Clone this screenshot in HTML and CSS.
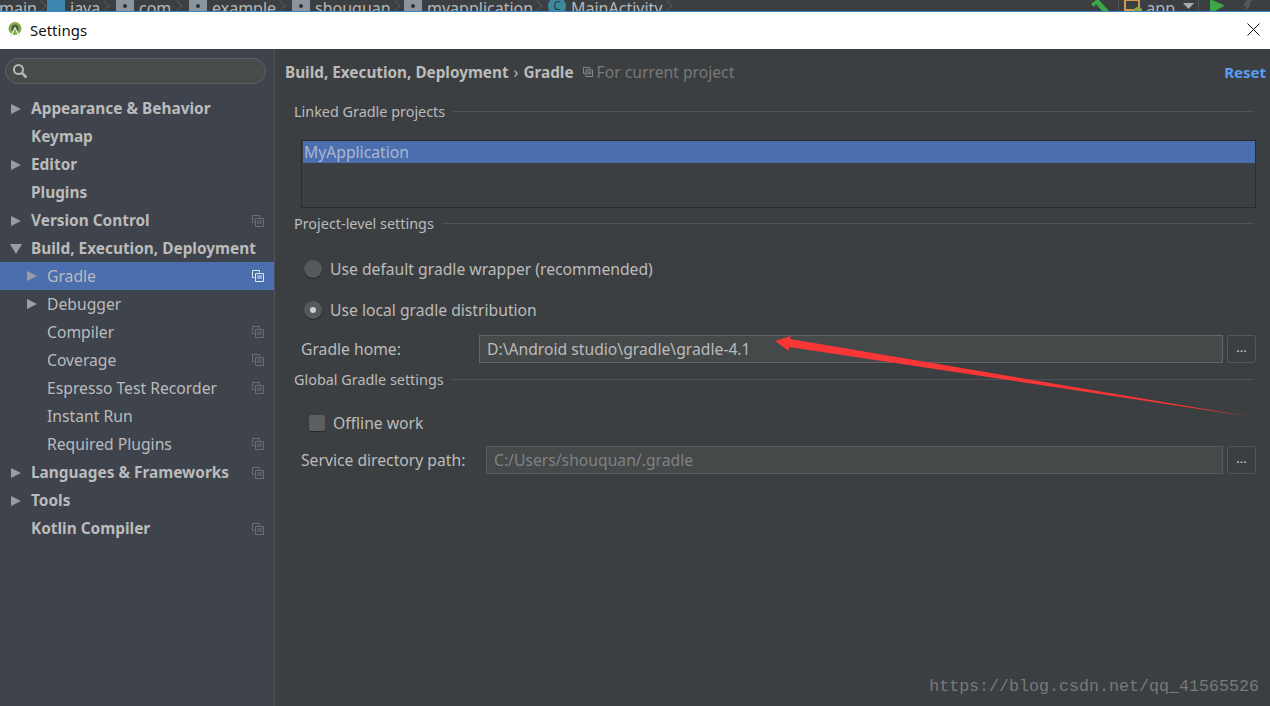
FILE: index.html
```html
<!DOCTYPE html>
<html lang="en">
  <head>
    <meta charset="UTF-8" />
    <meta name="viewport" content="width=device-width, initial-scale=1.0" />
    <title>Settings</title>
    <link rel="stylesheet" href="styles.css">
  </head>
  <body>
    <svg class="defs" width="0" height="0">
      <symbol id="copy" viewBox="0 0 12 12">
        <path d="M.5.5h7v2M.5.5v7h2" fill="none" stroke="currentColor" />
        <path d="M3.5 3.5h8v8h-8z" fill="none" stroke="currentColor" />
        <path d="M5 6h5M5 8h5" stroke="currentColor" />
      </symbol>
      <symbol id="folder" viewBox="0 0 18 14">
        <path d="M0 0h7l2 2h9v12H0z" fill="#8a949c" />
        <circle cx="9" cy="8" r="2" fill="#2d3134" />
      </symbol>
    </svg>

    <div class="ide-bar">
      <div class="crumbs">
        <span class="crumb crumb-first">main</span>
        <span class="crumb"><svg class="crumb-icon"><path d="M0 0h7l2 2h9v12H0z" fill="#3d86b0" /></svg>java</span>
        <span class="crumb"><svg class="crumb-icon"><use href="#folder" /></svg>com</span>
        <span class="crumb"><svg class="crumb-icon"><use href="#folder" /></svg>example</span>
        <span class="crumb"><svg class="crumb-icon"><use href="#folder" /></svg>shouquan</span>
        <span class="crumb"><svg class="crumb-icon"><use href="#folder" /></svg>myapplication</span>
        <span class="crumb crumb-last"><span class="class-badge">C</span>MainActivity</span>
      </div>
      <div class="run-tools">
        <svg class="tool-hammer" width="18" height="11"><path d="M0 4L5 0h3l10 11h-7L5 4 3 7z" fill="#3fa648" /></svg>
        <span class="tool-sep"></span>
        <svg class="tool-app" width="20" height="11"><path d="M1 0h14v10H1z" fill="none" stroke="#d19a4f" stroke-width="2" /><path d="M10 11a4 4 0 0 1 8 0z" fill="#88a83a" /></svg>
        <span class="tool-name">app</span>
        <svg class="tool-caret" width="11" height="7"><path d="M0 1h11L5.500 7z" fill="#a9adb0" /></svg>
        <span class="tool-sep"></span>
        <svg class="tool-run" width="15" height="11"><path d="M0 0h2l13 5.500L5 11H0z" fill="#3fa648" /></svg>
        <svg class="tool-bolt" width="10" height="11"><path d="M5 0h5L7 5h2l-6 6 1-5H1z" fill="#55595c" /></svg>
      </div>
    </div>

    <div class="titlebar">
      <svg class="app-logo" width="14" height="15" viewBox="0 0 14 15">
        <circle cx="7" cy="6.500" r="6.500" fill="#7fae45" />
        <path d="M7 2.500a3.500 3.500 0 0 1 3.500 3.500v3h-7V6A3.500 3.500 0 0 1 7 2.500z" fill="#4f5d45" />
        <path d="M2.500 14.500L7 6l4.500 8.500" fill="none" stroke="#e6e9e2" stroke-width="1.500" />
      </svg>
      <span class="title-text">Settings</span>
      <svg class="close-x" width="13" height="13"><path d="M.5.5l12 12M12.500.5l-12 12" stroke="#111" fill="none" /></svg>
    </div>

    <div class="dialog">
      <div class="sidebar">
        <div class="search">
          <svg width="16" height="16" viewBox="0 0 16 16"><circle cx="6.500" cy="6.500" r="4.500" fill="none" stroke="#b4b6b8" stroke-width="2" /><path d="M10 10l4.500 4.500" stroke="#b4b6b8" stroke-width="2.500" /></svg>
        </div>
        <ul class="tree">
          <li class="row top"><span class="arrow"></span>Appearance &amp; Behavior</li>
          <li class="row top"><span class="arrow none"></span>Keymap</li>
          <li class="row top"><span class="arrow"></span>Editor</li>
          <li class="row top"><span class="arrow none"></span>Plugins</li>
          <li class="row top"><span class="arrow"></span>Version Control<svg class="copy"><use href="#copy" /></svg></li>
          <li class="row top"><span class="arrow open"></span>Build, Execution, Deployment</li>
          <li class="row sub selected"><span class="arrow"></span>Gradle<svg class="copy"><use href="#copy" /></svg></li>
          <li class="row sub"><span class="arrow"></span>Debugger</li>
          <li class="row sub"><span class="arrow none"></span>Compiler<svg class="copy"><use href="#copy" /></svg></li>
          <li class="row sub"><span class="arrow none"></span>Coverage<svg class="copy"><use href="#copy" /></svg></li>
          <li class="row sub"><span class="arrow none"></span>Espresso Test Recorder<svg class="copy"><use href="#copy" /></svg></li>
          <li class="row sub"><span class="arrow none"></span>Instant Run</li>
          <li class="row sub"><span class="arrow none"></span>Required Plugins<svg class="copy"><use href="#copy" /></svg></li>
          <li class="row top"><span class="arrow"></span>Languages &amp; Frameworks<svg class="copy"><use href="#copy" /></svg></li>
          <li class="row top"><span class="arrow"></span>Tools</li>
          <li class="row top"><span class="arrow none"></span>Kotlin Compiler<svg class="copy"><use href="#copy" /></svg></li>
        </ul>
      </div>

      <div class="panel">
        <div class="panel-head">
          <b>Build, Execution, Deployment</b>
          <span class="head-sep">›</span>
          <b>Gradle</b>
          <svg class="copy head-copy"><use href="#copy" /></svg>
          <span class="head-note">For current project</span>
          <a class="reset">Reset</a>
        </div>

        <div class="section section-linked">Linked Gradle projects</div>
        <div class="project-list">
          <div class="project-row">MyApplication</div>
        </div>

        <div class="section section-project">Project-level settings</div>
        <label class="radio-row radio-first"><span class="radio"></span>Use default gradle wrapper (recommended)</label>
        <label class="radio-row radio-second"><span class="radio checked"></span>Use local gradle distribution</label>
        <div class="field-row field-home">
          <span class="field-label home-label">Gradle home:</span>
          <div class="field">D:\Android studio\gradle\gradle-4.1</div>
          <div class="more">...</div>
        </div>

        <div class="section section-global">Global Gradle settings</div>
        <label class="check-row"><span class="checkbox"></span>Offline work</label>
        <div class="field-row field-service">
          <span class="field-label service-label">Service directory path:</span>
          <div class="field muted">C:/Users/shouquan/.gradle</div>
          <div class="more">...</div>
        </div>
      </div>
    </div>

    <svg class="red-arrow" width="1270" height="706" viewBox="0 0 1270 706">
      <path d="M775 341L791 336 790 339 1252 417 789 347 789 351z" fill="#f93636" />
    </svg>
    <div class="watermark">https://blog.csdn.net/qq_41565526</div>
  </body>
</html>
```

FILE: styles.css
```css
* {
  box-sizing: border-box;
}

html,
body {
  height: 100%;
}

body {
  position: relative;
  display: flex;
  flex-direction: column;
  margin: 0;
  overflow: hidden;
  background-color: #3c3f41;
  color: #bbbbbb;
  font-family: "Noto Sans", "Open Sans", sans-serif;
  font-size: 15.7px;
}

b {
  font-size: 15.3px;
}

.defs {
  position: absolute;
}

/* ide window peeking out behind the dialog */
.ide-bar {
  display: flex;
  justify-content: space-between;
  flex: none;
  height: 12px;
  overflow: hidden;
  border-bottom: 1px solid #3c86c4;
  background-color: #3c3f41;
}

.crumbs {
  display: flex;
  margin-top: -3px;
  line-height: 22px;
  font-size: 16px;
  color: #b4b7b9;
}

.crumb {
  display: flex;
  align-items: flex-start;
  width: 73px;
  white-space: nowrap;
}

/* the small chevron between two crumbs */
.crumb::after {
  content: "";
  flex: none;
  width: 7px;
  height: 7px;
  margin: 5px 8px 0 auto;
  border-top: 1px solid #55585a;
  border-right: 1px solid #55585a;
  transform: rotate(45deg);
}

.crumb-first {
  width: 48px;
  margin-left: -1px;
}

.crumb:nth-child(2) { width: 69px; }
.crumb:nth-child(3) { width: 73px; }
.crumb:nth-child(4) { width: 103px; }
.crumb:nth-child(5) { width: 112px; }
.crumb:nth-child(6) { width: 144px; }
.crumb-last { width: 130px; }

.crumb-icon {
  flex: none;
  width: 18px;
  height: 14px;
  margin: 1px 5px 0 0;
}

.class-badge {
  flex: none;
  width: 18px;
  height: 18px;
  margin: 0 5px 0 0;
  border-radius: 50%;
  background-color: #3d8a9e;
  color: #1f3b44;
  font-size: 12px;
  line-height: 18px;
  text-align: center;
}

.run-tools {
  display: flex;
  align-items: flex-start;
  padding-right: 18px;
}

.tool-hammer { margin-right: 9px; }
.tool-app { margin: 0 2px 0 5px; }
.tool-caret { margin: 2px 4px 0 8px; }
.tool-run { margin: 0 17px 0 11px; }

.tool-sep {
  width: 1px;
  height: 11px;
  background-color: #55585a;
}

.tool-name {
  margin-top: -3px;
  font-size: 16px;
  line-height: 22px;
  color: #b4b7b9;
}

.titlebar {
  display: flex;
  align-items: center;
  flex: none;
  height: 37px;
  padding: 0 10px 2px 8px;
  background-color: #ffffff;
  color: #111111;
}

.title-text {
  flex: 1;
  margin-left: 8px;
  font-size: 15px;
}

.dialog {
  display: flex;
  flex: 1;
  min-height: 0;
}

.sidebar {
  flex: none;
  width: 275px;
  padding-top: 9px;
  border-right: 1px solid #50545a;
  background-color: #3e434c;
}

.search {
  display: flex;
  align-items: center;
  width: 261px;
  height: 26px;
  margin-left: 5px;
  padding-left: 6px;
  border: 1px solid #5d6163;
  border-radius: 13px;
  background-color: #474b4c;
}

.tree {
  margin: 10px 0 0;
  padding: 0;
  list-style: none;
}

.row {
  display: flex;
  align-items: center;
  height: 28px;
  padding-right: 10px;
  white-space: nowrap;
}

.row.top {
  padding-top: 1px;
  padding-left: 11px;
  font-size: 15.4px;
  font-weight: 700;
}

.row.sub {
  padding-left: 27px;
}

.row.selected {
  background-color: #4b6eaf;
}

.arrow {
  flex: none;
  width: 0;
  height: 0;
  margin-right: 10px;
  border-top: 5.500px solid transparent;
  border-bottom: 5.500px solid transparent;
  border-left: 10px solid #9a9da0;
}

.arrow.open {
  margin-left: -1px;
  margin-right: 9px;
  border-top: 10px solid #9a9da0;
  border-right: 6px solid transparent;
  border-bottom: 0;
  border-left: 6px solid transparent;
  width: 12px;
}

.arrow.none {
  border-color: transparent;
}

.copy {
  flex: none;
  width: 12px;
  height: 12px;
  margin-left: auto;
  color: #6b6f73;
}

.selected .copy {
  color: #e4e8ef;
}

.panel {
  flex: 1;
  min-width: 0;
  padding: 0 16px 0 19px;
}

.panel-head {
  display: flex;
  align-items: center;
  height: 22px;
  margin: 12px 0 0 -9px;
  white-space: nowrap;
}

.head-sep {
  margin: 0 5px;
}

.head-copy {
  width: 10px;
  height: 10px;
  margin: 0 4px 0 9px;
  color: #9a9da0;
}

.head-note {
  color: #787878;
}

.reset {
  margin-left: auto;
  margin-right: -12px;
  color: #589df6;
  font-size: 15px;
  font-weight: 700;
}

.section {
  display: flex;
  align-items: center;
  height: 20px;
  font-size: 14.4px;
  white-space: nowrap;
}

.section::after {
  content: "";
  flex: 1;
  height: 1px;
  margin-left: 8px;
  background-color: #505355;
}

.section-linked {
  margin-top: 18px;
}

.project-list {
  height: 68px;
  margin: 19px -2px 0 7px;
  padding: 0 0 0 1px;
  border: 1px solid #2b2b2b;
}

.project-row {
  height: 22px;
  padding-left: 1px;
  background-color: #4b6eaf;
  line-height: 23px;
  color: #a9b7cf;
}

.section-project {
  margin-top: 5px;
}

.radio-row,
.check-row {
  display: flex;
  align-items: center;
  height: 20px;
  white-space: nowrap;
}

.radio-first {
  margin: 26px 0 0 10px;
}

.radio-second {
  margin: 21px 0 0 10px;
}

.radio {
  display: flex;
  align-items: center;
  justify-content: center;
  flex: none;
  width: 18px;
  height: 18px;
  margin-right: 8px;
  border-radius: 50%;
  background-color: #56595b;
  box-shadow: 0 1px 1px #26282a;
}

.radio.checked::before {
  content: "";
  width: 6px;
  height: 6px;
  border-radius: 50%;
  background-color: #cfd0d1;
}

.field-row {
  display: flex;
  align-items: center;
  height: 28px;
  margin: 0 -2px 0 7px;
}

.field-home {
  margin-top: 15px;
}

.field-service {
  margin-top: 13px;
}

.field-label {
  flex: none;
}

.home-label { width: 178px; }
.service-label { width: 185px; }

.field {
  flex: 1;
  height: 28px;
  padding-left: 7px;
  border: 1px solid #646464;
  background-color: #45494a;
  line-height: 27px;
  white-space: nowrap;
}

.field.muted {
  color: #7f8284;
  border-color: #565a5b;
}

.more {
  flex: none;
  width: 29px;
  height: 28px;
  margin-left: 4px;
  border: 1px solid #555859;
  border-radius: 3px;
  font-size: 13px;
  line-height: 22px;
  text-align: center;
  color: #d0d0d0;
}

.section-global {
  margin-top: 6px;
}

.check-row {
  margin: 24px 0 0 15px;
}

.checkbox {
  flex: none;
  width: 16px;
  height: 16px;
  margin-right: 8px;
  border-radius: 2px;
  background-color: #5c5f61;
  box-shadow: 0 1px 1px #26282a;
}

/* annotation drawn over the screenshot */
.red-arrow {
  position: absolute;
  top: 0;
  left: 0;
  pointer-events: none;
}

.watermark {
  position: absolute;
  right: 11px;
  bottom: 10px;
  font-family: "Liberation Mono", "Noto Sans CJK SC", monospace;
  font-size: 16.67px;
  color: #77797a;
}
```
